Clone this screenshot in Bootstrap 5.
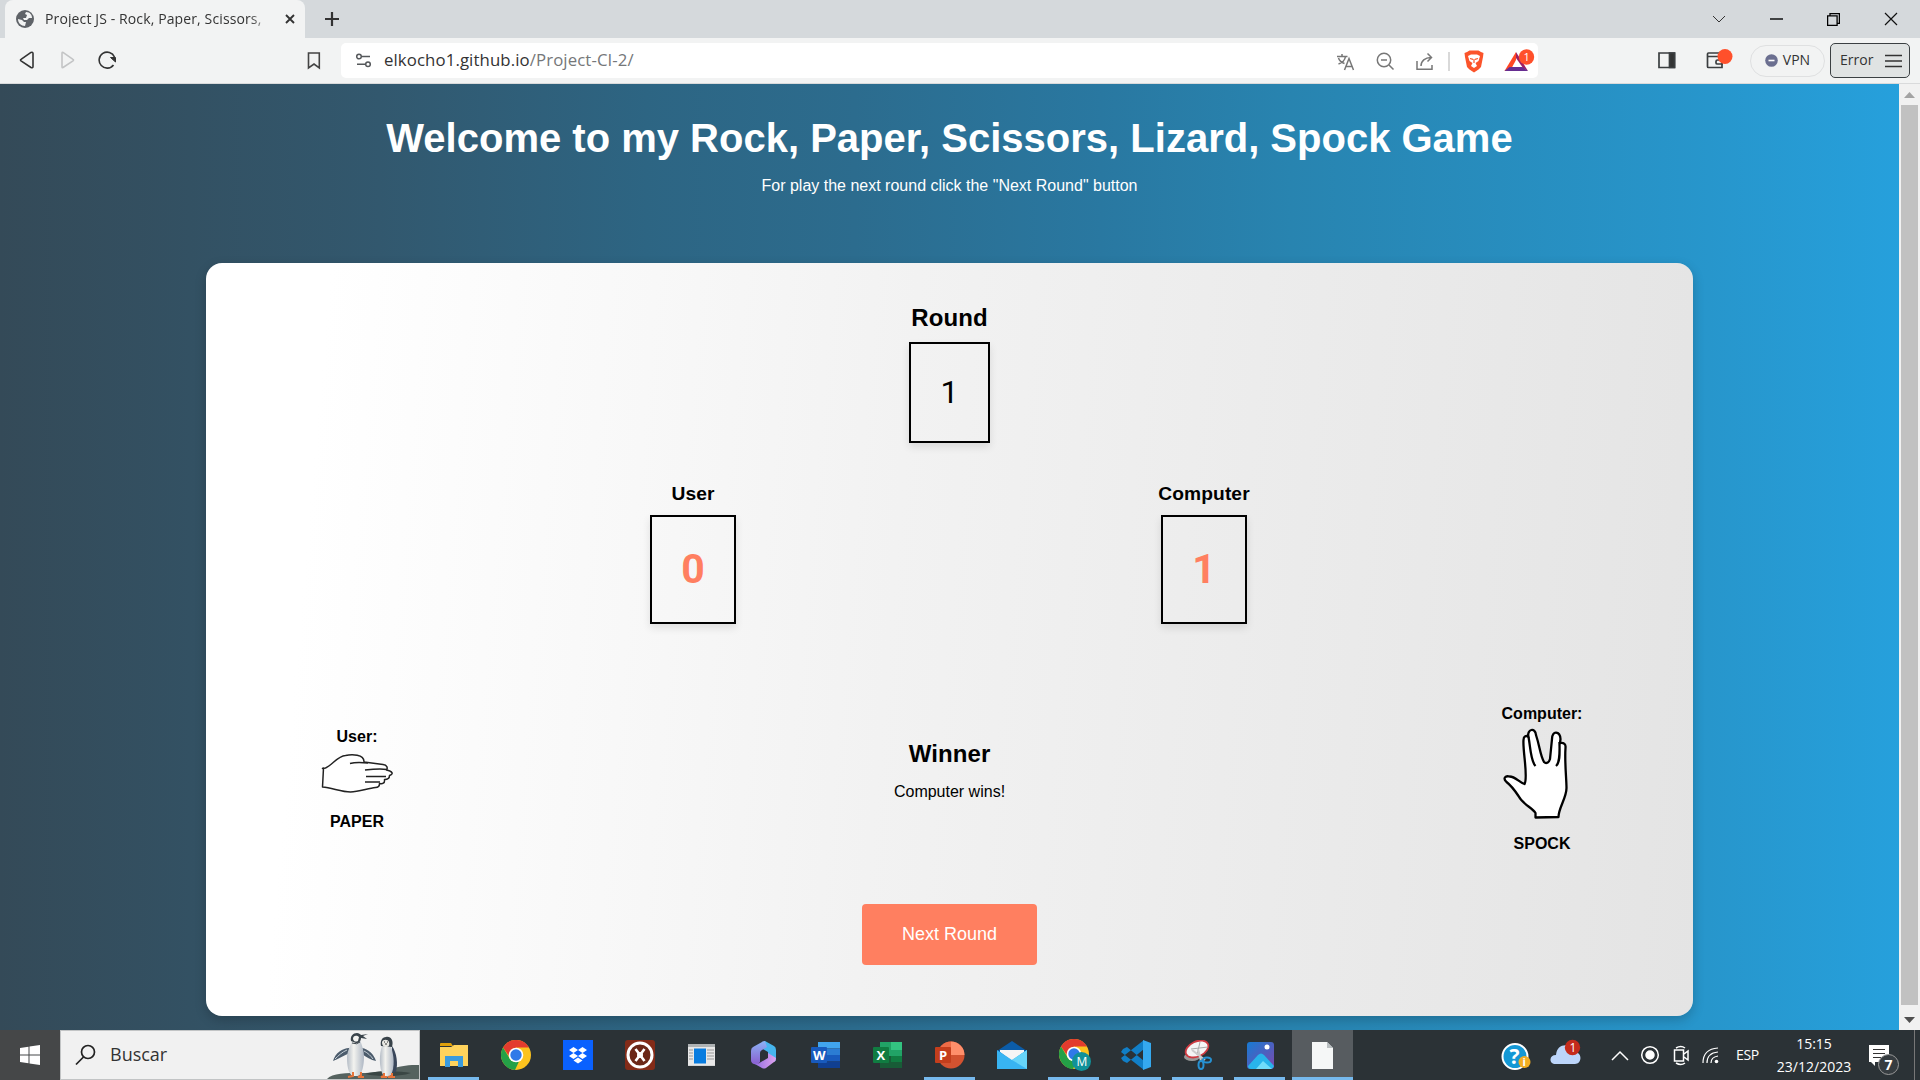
<!DOCTYPE html>
<html lang="en">
<head>
<meta charset="utf-8">
<title>Project JS - Rock, Paper, Scissors, Lizard, Spock</title>
<link rel="stylesheet" href="https://cdn.jsdelivr.net/npm/bootstrap@5.3.0/dist/css/bootstrap.min.css">
<style>
html,body{height:100%;overflow:hidden}
body{font-family:"Liberation Sans",Arial,sans-serif;color:#000;line-height:1.2}
svg{display:block;flex:none}
.ui{font-family:"Open Sans","Noto Sans",sans-serif}
.tabstrip{height:38px;background:#d5d9dc;padding-left:5px}
.tab{width:300px;background:#f2f3f3;border-radius:8px 8px 0 0;padding:0 9px 0 11px}
.tab-label{font-size:14px;width:226px;white-space:nowrap;color:#333;margin-left:11px;letter-spacing:.12px;-webkit-mask-image:linear-gradient(90deg,#000 90%,rgba(0,0,0,.25) 99%)}
.toolbar{height:46px;background:#f2f3f3;border-bottom:1px solid #d9dadb}
.nav-icons{width:341px;padding:0 19px 0 17px}
.address{width:1197px;height:35px;background:#fff;border-radius:5px;padding:0 0 0 14px}
.address-text{font-size:16.8px;color:#333;margin-left:12px;letter-spacing:.1px}
.address-text span{color:#757779}
.vpn{width:75px;height:32px;border:1.5px solid #dfe0e1;border-radius:16px;font-size:14px;color:#333;gap:5px}
.menu-btn{width:80px;height:35px;border:1.5px solid #3b4043;border-radius:5px;background:#e0e3e3;font-size:14px;color:#333;padding:0 7px 0 9px}
.viewport{height:946px}
.page{background:linear-gradient(90deg,#344a58 0%,#32586e 20%,#2d6583 34%,#2c6c8e 45%,#2978a1 58%,#2884b0 68%,#2796cc 90%,#26a0dc 100%);color:#fff}
.title{font-size:40px;font-weight:700;line-height:46px;margin:31px 0 0}
.sub{font-size:16px;line-height:18px;margin:16px 0 0}
.game{width:1487px;height:753px;margin-top:68px;border-radius:16px;background:linear-gradient(95deg,#fff 8%,#f8f8f8 29%,#f2f2f2 46%,#ebebeb 72%,#e4e4e4 100%);box-shadow:0 4px 12px rgba(0,0,0,.2);color:#000}
.heading{font-size:24px;font-weight:700;letter-spacing:.1px;line-height:28px}
.score-name{font-size:19.2px;font-weight:700;letter-spacing:.1px;line-height:22px}
.numbox{border:2px solid #000;box-shadow:0 4px 8px rgba(0,0,0,.1);font-family:Roboto,"Liberation Sans",sans-serif}
.round-box{width:81px;height:101px;font-size:32px;margin-top:10px}
.score-box{width:86px;height:109px;font-size:41px;font-weight:700;color:#ff7f60;margin-top:10px}
.scores{padding:0 445px 0 443px;margin-top:40px}
.score-col{width:88px}
.hands{margin-top:81px;height:148px;padding:0 98px 0 98px}
.hand-col{width:106px;font-size:16px;font-weight:700;line-height:18px}
.next{width:175px;height:61px;margin-top:51px;background:#ff7f60;border:0;border-radius:4px;color:#fff;font-size:18px;--bs-btn-hover-bg:#ff7f60}
.scrollbar{width:21px;background:#f1f1f1;padding:8px 2px 7px}
.thumb{background:#c1c1c1;width:17px}
.taskbar{height:50px;background:#2b3236;color:#fff}
.start{width:60px;background:#454748}
.search{width:360px;background:#f1f1f1;border:1px solid #c2c4c5;color:#333;font-size:18px;padding-left:14px}
.app{width:62px;border-right:6px solid transparent;border-left:5px solid transparent;background-clip:padding-box;height:50px}
.on{background-image:linear-gradient(#76b9ed,#76b9ed);background-repeat:no-repeat;background-size:100% 3px;background-position:bottom}
.active-app{width:61px;border:0;background-color:#575c60;background-clip:border-box}
.tray{font-size:14px;margin-left:auto}
</style>
</head>
<body class="d-flex flex-column">
<header class="ui">
<div class="tabstrip d-flex align-items-stretch">
 <div class="tab d-flex align-items-center">
  <svg width="18" height="18" viewBox="0 0 18 18"><circle cx="9" cy="9" r="9" fill="#5f6368"/><path d="M10 2c4 0 6 3 6 6h-3l-2 2H8L7 8h3l1-3-2-1zM2 9l4 1 2 2h2l-1 4C5 16 2 13 2 9z" fill="#f2f3f3"/></svg>
  <div class="tab-label">Project JS - Rock, Paper, Scissors,</div>
  <svg class="ms-auto" width="12" height="12" viewBox="0 0 12 12" stroke="#333" stroke-width="1.900"><path d="M2 2l8 8M10 2L2 10"/></svg>
 </div>
 <svg class="align-self-center" style="margin-left:19px" width="16" height="16" viewBox="0 0 16 16" stroke="#333" stroke-width="2.2"><path d="M8 1v14M1 8h14"/></svg>
 <div class="d-flex align-items-center ms-auto" style="gap:44px;padding-right:22px">
  <svg width="14" height="8" viewBox="0 0 14 8" fill="none" stroke="#333"><path d="M1 1l6 6 6-6"/></svg>
  <svg width="13" height="2"><path d="M0 1h13" stroke="#000" stroke-width="1.4"/></svg>
  <svg width="13" height="13" viewBox="0 0 13 13" fill="none" stroke="#000" stroke-width="1.3"><path d="M.6 2.8h9.5v9.5H.6zM3 2.6V.7h9.4v9.6h-2.2"/></svg>
  <svg width="14" height="14" viewBox="0 0 14 14" stroke="#111" stroke-width="1.2"><path d="M1 1l12 12M13 1L1 13"/></svg>
 </div>
</div>
<div class="toolbar d-flex align-items-center">
 <div class="nav-icons d-flex align-items-center">
  <svg width="100" height="20" viewBox="0 1 100 20" fill="none" stroke="#333" stroke-width="1.6" stroke-linejoin="round"><path d="M4 9.4L14 2.400Q16 1.800 16 3.500v13q0 1.800-2 1L4 10.800Q3 10 4 9.400z"/><path d="M56 9.400L46 2.400Q45 1.800 45 3.500v13q0 1.800 1 1L56 10.800Q57 10 56 9.400z" stroke="#c3c4c5"/><path d="M96.500 15a8 8 0 1 1 1-8"/><path d="M93.500 7.500h5V12z" fill="#333" stroke-width="1"/></svg>
  <svg class="ms-auto" width="16" height="18" viewBox="0 0 16 18" fill="none" stroke="#444" stroke-width="1.6"><path d="M2.500 1h10.800v15L8 12l-5.500 4z"/></svg>
 </div>
 <div class="address d-flex align-items-center">
  <svg width="17" height="15" viewBox="0 0 17 15" fill="none" stroke="#55585b" stroke-width="1.5"><circle cx="4" cy="3.500" r="2.300"/><path d="M7 3.500h8M2 11.300h8"/><circle cx="13" cy="11.300" r="2.300"/></svg>
  <div class="address-text">elkocho1.github.io<span>/Project-CI-2/</span></div>
  <svg class="ms-auto" width="202" height="34" viewBox="1336 43 202 34" fill="none" stroke="#777" stroke-width="1.5">
   <path d="M1337 55.500h10.500M1342 53v2.500M1338.500 63c5-1.500 6.500-4.500 7-7.500M1338.500 57c1 3 3 4.500 6 5.500M1344.500 69l4.500-11.500 4.500 11.500M1346 65.500h6"/>
   <circle cx="1384" cy="59" r="6.700"/><path d="M1381 59h6M1389 64l4.500 4.500"/>
   <path d="M1417 60v8.300h15V64M1421 65c0-5 4-8.500 10-8.500M1427.500 52.500l4 4-4 4"/><path d="M1449 51v19" stroke="#ccc"/>
   <path d="M1467 51l2.500-1.500h9l2.500 1.500 2.500 1-.5 4-2 10-2.500 2.500-4.500 3-4.500-3-2.500-2.500-2-10-.500-4z" fill="#fb542b" stroke="none"/><path d="M1468 55l3-1.500h6l3 1.500-1.500 5-3 2 1.500 3-3 2-3-2 1.500-3-3-2z" fill="#fff" stroke="none"/><path d="M1470 57.500l3 .8M1478 57.500l-3 .8M1474 58v4" stroke="#fb542b" stroke-width="1.200"/>
   <path d="M1516 51l-11.500 19h5.500l6-11z" fill="#ff4724" stroke="none"/><path d="M1516 51l12 19-5-3-7-10z" fill="#9e1f63" stroke="none"/><path d="M1504.500 70l5-4h13l5.500 4z" fill="#662d91" stroke="none"/><circle cx="1526.500" cy="56" r="7.700" fill="#ff502b" stroke="none"/><text x="1523.500" y="60" fill="#fff" stroke="none" font-size="11">1</text>
  </svg>
 </div>
 <svg style="margin-left:120px" width="75" height="24" viewBox="0 1 75 24" fill="none" stroke="#3b3e40" stroke-width="1.700"><path d="M1 5h15.500v14.500H1z"/><path d="M11.500 5h5v14.500h-5z" fill="#333"/><path d="M64 8.500H49.500V6q0-1 1-1H63q1 0 1 1v13.500H50.500q-1 0-1-1V8.500M65 12h-5.500q-1.500 0-1.500 1.500v1.500q0 1 1.500 1H65"/><circle cx="67" cy="8.500" r="7.500" fill="#ff502b" stroke="none"/></svg>
 <div class="vpn d-flex align-items-center justify-content-center" style="margin-left:17px"><svg width="13" height="13"><circle cx="6.500" cy="6.500" r="6.300" fill="#6b6f90"/><path d="M3.500 6.500h6" stroke="#fff" stroke-width="1.600"/></svg>VPN</div>
 <div class="menu-btn d-flex align-items-center justify-content-between" style="margin-left:5px">Error<svg width="17" height="14" stroke="#333" stroke-width="1.600"><path d="M0 1.500h17M0 7h17M0 12.500h17"/></svg></div>
</div>
</header>
<div class="viewport d-flex">
<main class="page flex-grow-1 d-flex flex-column align-items-center">
 <h1 class="title">Welcome to my Rock, Paper, Scissors, Lizard, Spock Game</h1>
 <p class="sub">For play the next round click the "Next Round" button</p>
 <section class="game d-flex flex-column align-items-center">
  <div class="heading" style="margin-top:41px">Round</div>
  <div class="numbox round-box d-flex align-items-center justify-content-center">1</div>
  <div class="scores d-flex justify-content-between w-100">
   <div class="score-col d-flex flex-column align-items-center"><div class="score-name">User</div><div class="numbox score-box d-flex align-items-center justify-content-center">0</div></div>
   <div class="score-col d-flex flex-column align-items-center"><div class="score-name">Computer</div><div class="numbox score-box d-flex align-items-center justify-content-center">1</div></div>
  </div>
  <div class="hands d-flex justify-content-between align-items-center w-100">
   <div class="hand-col d-flex flex-column align-items-center"><div>User:</div>
    <svg style="margin:7px 0 18px" width="74" height="42" viewBox="320 753 74 42" fill="#fff" stroke="#222" stroke-width="1.500" stroke-linejoin="round"><path d="M322.500 768.500l3-.5c7-3 12-12 20-12.500 6-1.500 19-1.500 18.500 6.500l19 2.500c4 .5 5 3.500 3.500 5.500 6 1 7.500 4 3 5.500 0 3-2 4-5 4 .5 4-2 4.500-5 4 0 3-1 4-4 4-8 1-17 4.500-25 4.500-9 0-18-4-28-5l1-19z"/><path d="M350 763.500c5-1.500 14-1 18-.500M365 770c9-1 16-1.500 22-.500M366 776.500h20M365 782h15" fill="none"/></svg>
    <div>PAPER</div></div>
   <div class="text-center" style="width:200px;margin-top:-17px"><div class="heading">Winner</div><div style="font-size:16px;line-height:18px;margin-top:15px">Computer wins!</div></div>
   <div class="hand-col d-flex flex-column align-items-center"><div>Computer:</div>
    <svg style="margin:5px 14px 15px 0" width="66" height="92" viewBox="1502 728 66 92" fill="#fff" stroke="#000" stroke-width="2.300" stroke-linejoin="round"><path d="M1535.500 817.500v-4.500c-3-5-13-9-17-17-4-6-8-11-12-14-4-4-1-6.500 3-5.500 6 0 10 6 15 7.500 4-6-2-34-1-44 0-4 3-5 5-3-2-8 7-10 7.500-2 4 12 4 20 8 27 2 2 5 1 6-3l2-20c0-9 8-8 8.500 0l-.5 4c4-.5 6 1 5.500 5-1 14 1 31 1 40 0 10-8 20-8 29z"/><path d="M1528.500 737c2 10 2 24 7 29M1559.500 742c0 10 1 20-3.500 24" fill="none"/></svg>
    <div>SPOCK</div></div>
  </div>
  <button class="btn next">Next Round</button>
 </section>
</main>
<div class="scrollbar d-flex flex-column align-items-center"><svg width="11" height="6"><path d="M0 6L5.500 0 11 6z" fill="#a3a3a3"/></svg><div class="thumb flex-grow-1" style="margin:7px 0 12px"></div><svg width="11" height="6"><path d="M0 0l5.500 6L11 0z" fill="#505050"/></svg></div>
</div>
<footer class="taskbar ui d-flex">
 <div class="start d-flex align-items-center justify-content-center"><svg width="20" height="20" viewBox="0 0 20 20" fill="#fff"><path d="M0 3l8.500-1.300v7.800H0zM9.500 1.500L20 0v9.500H9.500zM0 10.500h8.500v7.800L0 17zM9.500 10.500H20V20L9.500 18.500z"/></svg></div>
 <div class="search d-flex align-items-center">
  <svg width="21" height="22" viewBox="0 0 21 22" fill="none" stroke="#222" stroke-width="1.700"><circle cx="13" cy="8" r="6.500"/><path d="M8.500 13L1 20.500"/></svg><span style="margin-left:14px">Buscar</span>
  <svg class="ms-auto" width="94" height="48" viewBox="0 0 94 48"><defs><linearGradient id="belly"><stop stop-color="#b4bcc6"/><stop offset=".4" stop-color="#f3f3ef"/><stop offset="1" stop-color="#aeb7c4"/></linearGradient></defs>
   <path d="M2 48c5-6 20-6 34-6 26 0 36-9 58-8v14z" fill="#55625f"/><path d="M40 43c8-3 34-3 46-1-12 4-32 4-46 1z" fill="#3a4644"/>
   <path d="M24 17C18 17 10 22 8 30c5-2 12-6 17-8zM37 17c6 1 12 6 14 13-5-1-10-4-14-7z" fill="#4c5c6c"/><path d="M22 19c-5 2-9 6-12 9M39 20c4 2 7 5 9 8" stroke="#c4cdd5" fill="none"/>
   <path d="M27 9c2-2 6-2 8 0 2 5 4 11 4 17 0 8-2 18-6 19h-5c-5-2-6-11-6-19 0-6 4-11 5-17z" fill="url(#belly)"/>
   <path d="M26 10c-1-5 2-8 6-8 2 0 3 1 4 2l7-1-5 2 4 3-6-1c0 3-2 5-5 5z" fill="#39434a"/><path d="M28 8c0-4 4-4 6-2l-1 4c-2 1-4 1-5-2z" fill="#f2f2f0"/><path d="M27 12q5 2 8-1" stroke="#39434a" fill="none"/>
   <path d="M67 15c5 7 6 18 4 26l-5 1z" fill="#39465a"/><path d="M57 15c3-3 7-2 9 1 3 8 4 20 0 28-2 2-6 2-8 0-4-7-4-21-1-29z" fill="url(#belly)"/>
   <path d="M56 15c-1-5 1-9 5-9 5-1 8 4 6 10z" fill="#39434a"/><path d="M57 11c1-3 6-3 7 0 1 4-1 5-3 5s-4-1-4-5z" fill="#e8e8e3"/><path d="M59 11h1M62 11h1M60 13h2" stroke="#333"/>
   <path d="M28 41v4l-5 1M36 41v4l-3 1h6M59 42v3l-3 1h6M67 42v3l-4 1h7" stroke="#e8743a" stroke-width="2" fill="none"/></svg>
 </div>
 <div class="d-flex" style="margin-left:3px">
  <div class="app on d-flex align-items-center justify-content-center"><svg width="28" height="26" viewBox="0 0 28 26"><path d="M0 2q0-1 1-1h10l2 3H0z" fill="#dfa00b"/><path d="M0 5h11l3-2h14v21H0z" fill="#ffd35c"/><path d="M5 14h18v11h-5v-6h-8v6H5z" fill="#3b9bdd"/></svg></div>
  <div class="app d-flex align-items-center justify-content-center"><svg width="30" height="30" viewBox="0 0 30 30"><g id="chromeDisc"><circle cx="15" cy="15" r="15" fill="#fcc31e"/><path d="M2 7.500A15 15 0 0 1 28 7.500H15L10 19z" fill="#e33b2e"/><path d="M2 7.500l7 11.500c2 3 6 3 9 2.500l-4 8.500A15 15 0 0 1 2 7.500z" fill="#24a047"/><circle cx="15" cy="15" r="7.300" fill="#fff"/><circle cx="15" cy="15" r="5.700" fill="#3079e8"/></g></svg></div>
  <div class="app d-flex align-items-center justify-content-center"><svg width="30" height="30" viewBox="0 0 30 30"><path d="M0 0h30v30H0z" fill="#0a61fe"/><path d="M10.500 7l4.500 3-4.500 3L6 10zM19.500 7l4.500 3-4.500 3-4.500-3zM10.500 13l4.500 3-4.500 3L6 16zM19.500 13l4.500 3-4.500 3-4.500-3zM15 17.500l4.500 3-4.500 3-4.500-3z" fill="#fff"/></svg></div>
  <div class="app d-flex align-items-center justify-content-center"><svg width="30" height="30" viewBox="0 0 30 30"><rect width="30" height="30" rx="3" fill="#832b18"/><circle cx="15" cy="15" r="12" fill="#6b2717" stroke="#fff" stroke-width="3"/><path d="M10.500 9l9 12M19.500 9l-9 12" stroke="#fff" stroke-width="2.600"/><circle cx="15" cy="15" r="3" fill="#fff"/></svg></div>
  <div class="app d-flex align-items-center justify-content-center"><svg width="27" height="30" viewBox="0 0 27 30"><path d="M0 0h27v30H0z" fill="#e8e8e8" transform="matrix(1 0 0 .73 0 4)"/><path d="M0 4h27v3H0z" fill="#aeb2b4"/><path d="M6 8.500h12v15H6z" fill="#087ce0"/><path d="M1 10h4M1 13h4M1 16h4M19 10h7M19 13h7M19 16h7M19 19h7M1 19h4" stroke="#999"/></svg></div>
  <div class="app d-flex align-items-center justify-content-center"><svg width="27" height="28" viewBox="0 0 27 28"><defs><linearGradient id="ribbonA" x2="0" y2="1"><stop stop-color="#8bb3f5"/><stop offset="1" stop-color="#8a5ed0"/></linearGradient><linearGradient id="ribbonB"><stop stop-color="#8a6ae0"/><stop offset="1" stop-color="#e0a2ee"/></linearGradient></defs><path d="M15 0l9 5q2 1 2 4v9q0 2-2 3l-6-4v-6l-7-4z" fill="#46b5ee"/><path d="M15 0Q13 0 12 1L3 6Q1 7 1 10v9q0 3 3 4 4 1 6-2V12q0-2 2-3l5-3z" fill="url(#ribbonA)"/><path d="M26 17q0 3-2 4l-8 6q-2 1-4 0l-9-5q5 2 8-1l7-4V12z" fill="url(#ribbonB)"/></svg></div>
  <div class="app d-flex align-items-center justify-content-center"><svg width="30" height="28" viewBox="0 0 30 28"><path d="M7 1h22v6.500H7z" fill="#41a5ee"/><path d="M7 7.500h22V14H7z" fill="#2b7cd3"/><path d="M7 14h22v6.500H7z" fill="#185abd"/><path d="M7 20.500h22V27H7z" fill="#103f91"/><rect y="6" width="16" height="16" rx="1" fill="#185abd"/><text x="2" y="19" font-size="13" font-weight="700" fill="#fff">W</text></svg></div>
  <div class="app d-flex align-items-center justify-content-center"><svg width="30" height="28" viewBox="0 0 30 28"><path d="M7 1h22v26H7z" fill="#21a366"/><path d="M18 1h11v8H18z" fill="#33c481"/><path d="M18 15h11v6H18z" fill="#107c41"/><path d="M7 15h11v12H7zM18 21h11v6H18z" fill="#185c37"/><rect y="6" width="16" height="16" rx="1" fill="#107c41"/><text x="3.500" y="19" font-size="13" font-weight="700" fill="#fff">X</text></svg></div>
  <div class="app on d-flex align-items-center justify-content-center"><svg width="30" height="28" viewBox="0 0 30 28"><circle cx="16" cy="14" r="13.500" fill="#d35230"/><path d="M16 .500v13.500H2.500A13.500 13.500 0 0 1 16 .500z" fill="#ed6c47"/><path d="M16 .500A13.500 13.500 0 0 1 29.500 14H16z" fill="#ff8f6b"/><rect y="6" width="16" height="16" rx="1" fill="#c43e1c"/><text x="4" y="19" font-size="13" font-weight="700" fill="#fff">P</text></svg></div>
  <div class="app d-flex align-items-center justify-content-center"><svg width="30" height="28" viewBox="0 0 30 28"><path d="M0 10L15 0l15 10-15 9z" fill="#0b5ca8"/><path d="M3 9h24v2l-12 9L3 11z" fill="#f5f5f5"/><path d="M0 9l15 10L30 9v19H0z" fill="#38b4f2"/><path d="M30 9v19L15 19z" fill="#67d4f8"/></svg></div>
  <div class="app on d-flex align-items-center justify-content-center"><svg style="margin-left:3px" width="32" height="32" viewBox="0 0 32 32"><use href="#chromeDisc"/><circle cx="22.500" cy="22.500" r="9.500" fill="#119199"/><text x="17.500" y="27" font-size="12" fill="#fff">M</text></svg></div>
  <div class="app on d-flex align-items-center justify-content-center"><svg width="30" height="30" viewBox="0 0 30 30"><path d="M2 9l4-2 17 14v9L0 12zM2 21l4 2 17-14V0L0 18z" fill="#117fc7"/><path d="M22 0l8 3v24l-8 3z" fill="#35a9ef"/></svg></div>
  <div class="app on d-flex align-items-center justify-content-center"><svg style="margin-left:2px" width="30" height="30" viewBox="0 0 30 30" fill="none"><ellipse cx="8" cy="17" rx="8" ry="4" fill="#999"/><ellipse cx="13" cy="9" rx="12" ry="7.500" transform="rotate(-25 13 9)" fill="#f5f5f5" stroke="#ce3a41" stroke-width="1.800"/><path d="M7 9l17-2M16 2L13 15" stroke="#aaa"/><path d="M8 10l13 10M14 9l3 12" stroke="#ccc" stroke-width="2"/><ellipse cx="23" cy="20" rx="4" ry="2.500" stroke="#2691d2" stroke-width="2"/><ellipse cx="17" cy="25" rx="2.500" ry="4" stroke="#2691d2" stroke-width="2"/></svg></div>
  <div class="app on d-flex align-items-center justify-content-center"><svg style="margin-left:2px" width="27" height="27" viewBox="0 0 27 27"><defs><linearGradient id="dusk" x2="1" y2="1"><stop stop-color="#167bd3"/><stop offset="1" stop-color="#7d48ad"/></linearGradient></defs><rect width="27" height="27" rx="3" fill="url(#dusk)"/><path d="M1 24l10-11q3-3 6 0l10 11q-1 3-4 3H4q-3 0-3-3z" fill="#28b4eb"/><path d="M9 27l7-8 9 8z" fill="#70ddfa"/><circle cx="20" cy="5" r="2.500" fill="#fff"/></svg></div>
  <div class="app active-app on d-flex align-items-center justify-content-center" style="margin-left:1px"><svg width="22" height="27" viewBox="0 0 22 27"><path d="M0 0h15l6 6v21H0z" fill="#f5f7f7"/><path d="M15 0v6h6z" fill="#b9bfc1"/></svg></div>
 </div>
 <div class="tray d-flex align-items-center">
  <svg width="222" height="50" viewBox="1500 1030 222 50" fill="none" stroke="#fff" stroke-width="1.500"><circle cx="1515" cy="1056.500" r="12.500" fill="#1498d5" stroke-width="2"/><text x="1509.500" y="1064" fill="#fff" stroke="none" font-size="21" font-weight="700">?</text><circle cx="1524.500" cy="1062" r="6" fill="#f3ae23" stroke="none"/><text x="1522.500" y="1066" font-size="11" font-weight="700" fill="#fff" stroke="none">i</text><path d="M1554 1064c-5-1-5-9 2-9 1-13 16-12 18-3 9 0 8 12 1 12z" fill="#bcd5fa" stroke="none"/><circle cx="1572.500" cy="1047.500" r="7.700" fill="#c42b1c" stroke="none"/><text x="1569.500" y="1052" font-size="12" fill="#fff" stroke="none">1</text><path d="M1612 1060l8-8 8 8"/><circle cx="1650" cy="1055" r="8.300"/><circle cx="1650" cy="1055" r="4" fill="#fff"/><path d="M1674.500 1050h9v11h-9zM1684 1054l4-3v9l-4-3M1676 1048q5-3 9 0M1676 1063q5 3 9 0"/><path d="M1703 1063q0-14 15-15M1707 1063q0-10 11-11M1711 1063q0-6 7-7" stroke-width="1.200"/><circle cx="1716.500" cy="1061.500" r="1.800" fill="#fff" stroke="none"/></svg>
  <span style="margin-left:14px;width:24px;font-size:14px;letter-spacing:-.4px">ESP</span>
  <div class="text-center" style="margin-left:12px;width:84px;font-size:14px;line-height:23px;white-space:nowrap">15:15<br>23/12/2023</div>
  <svg style="margin-left:10px" width="54" height="50" viewBox="1866 1030 54 50"><path d="M1869 1045h20v17h-14v4l-4-4h-2z" fill="#fff"/><path d="M1873 1049.500h12M1873 1053.500h12M1873 1057.500h8" stroke="#333"/><circle cx="1888.500" cy="1064.500" r="10" fill="#363c40" stroke="#999"/><text x="1884.500" y="1070" font-size="14" font-weight="700" fill="#fff">7</text><path d="M1914.500 1030v50" stroke="#777"/></svg>
 </div>
</footer>
<script src="https://cdn.jsdelivr.net/npm/bootstrap@5.3.0/dist/js/bootstrap.bundle.min.js"></script>
</body>
</html>
